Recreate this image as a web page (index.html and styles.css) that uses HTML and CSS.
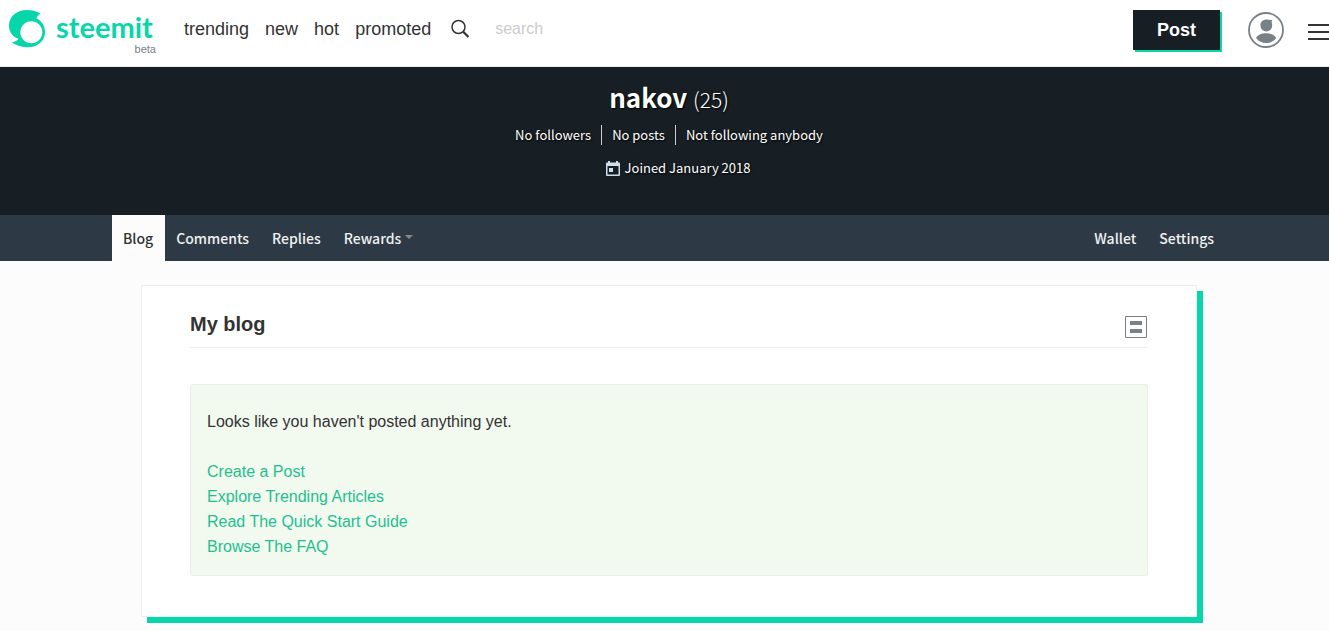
FILE: index.html
```html
<!DOCTYPE html>
<html lang="en">
<head>
<meta charset="utf-8">
<title>nakov — Steemit</title>
<link rel="stylesheet" href="styles.css">
</head>
<body>
<div class="page">
  <header class="header">
    <a class="logo" href="#">
      <svg class="logo-mark" viewBox="0 0 36 38" width="36" height="38" aria-hidden="true">
        <path fill="#06d6a9" fill-rule="evenodd" d="M0 15.500C0 6 8 0 18 0c5 0 9 1 13.500 3.500C29.500 5 28.500 6 27.300 8.300C32.500 10.500 36 16 36 22c0 9-7.500 15.300-17 15.300C13 37.300 7.500 35.500 2.800 32.500C6 31.800 8.500 30.800 9.500 28.800C4 27.500 0 22 0 15.500zM22.300 11.300a11 11 0 1 0 0 22a11 11 0 1 0 0-22z"/>
      </svg>
      <span class="logo-text">
        <span class="logo-name">steemit</span>
        <span class="logo-beta">beta</span>
      </span>
    </a>
    <nav class="feeds" aria-label="Feeds">
      <a href="#">trending</a>
      <a href="#">new</a>
      <a href="#">hot</a>
      <a href="#">promoted</a>
    </nav>
    <form class="search">
      <button class="icon-button" type="button" aria-label="Search">
        <svg viewBox="0 0 20 20" width="20" height="20" fill="none" stroke="#333" aria-hidden="true">
          <circle cx="7.500" cy="8" r="6.500" stroke-width="1.500"/>
          <path d="M12.200 12.700l5.300 5.300" stroke-width="2.200"/>
        </svg>
      </button>
      <input class="search-input" type="text" placeholder="search" aria-label="Search text">
    </form>
    <div class="actions">
      <button class="post" type="button">Post</button>
      <button class="icon-button avatar" type="button" aria-label="Account">
        <svg viewBox="0 0 36 36" width="36" height="36" aria-hidden="true">
          <circle cx="18" cy="18" r="17" fill="none" stroke="#788187" stroke-width="1.800"/>
          <path fill="#788187" d="M24.300 7.900c-.7.900-.8 2-.4 3.400.2.800.3 1.500.3 2.200a5.900 5.900 0 0 1-11.800 0C12.400 9.800 15 7.600 18.600 7.600c2 0 3.700.6 5.700.3z"/>
          <path fill="#788187" d="M8 26c2-3.400 6-4.800 10.200-4.800S26.200 22.600 28.300 26c-2.600 3.300-6 5-10.100 5S10.600 29.300 8 26z"/>
        </svg>
      </button>
      <button class="icon-button menu" type="button" aria-label="Menu">
        <svg viewBox="0 0 24 18" width="24" height="18" aria-hidden="true">
          <path fill="#333" d="M0 1h24v2H0zM0 8h24v2H0zM0 15h24v2H0z"/>
        </svg>
      </button>
    </div>
  </header>

  <section class="profile">
    <h1 class="profile-name">nakov <span class="reputation">(25)</span></h1>
    <ul class="stats">
      <li>No followers</li>
      <li>No posts</li>
      <li>Not following anybody</li>
    </ul>
    <p class="joined">
      <svg viewBox="0 0 14 15" width="14" height="15" aria-hidden="true">
        <path fill="#cfdeed" fill-rule="evenodd" d="M1 1.500h1V0h2v1.500h6V0h2v1.500h1a1 1 0 0 1 1 1V14a1 1 0 0 1-1 1H1a1 1 0 0 1-1-1V2.500a1 1 0 0 1 1-1zM1.500 5v8.500h11V5zM3 7h4v4H3z"/>
      </svg>
      <span>Joined January 2018</span>
    </p>
  </section>

  <nav class="tabs" aria-label="Profile">
    <div class="tabs-inner">
      <a class="tab tab-active" href="#">Blog</a>
      <a class="tab" href="#">Comments</a>
      <a class="tab" href="#">Replies</a>
      <a class="tab tab-rewards" href="#">Rewards<span class="caret"></span></a>
      <a class="tab tab-right" href="#">Wallet</a>
      <a class="tab" href="#">Settings</a>
    </div>
  </nav>

  <main class="card">
    <div class="card-head">
      <h2 class="card-title">My blog</h2>
      <button class="icon-button" type="button" aria-label="Change layout">
        <svg viewBox="0 0 22 22" width="22" height="22" aria-hidden="true">
          <path fill="none" stroke="#788187" d="M.5.5h21v21H.5z"/>
          <path fill="#788187" d="M5 5h12v4H5zM5 13h12v4H5z"/>
        </svg>
      </button>
    </div>
    <div class="callout">
      <p class="callout-text">Looks like you haven't posted anything yet.</p>
      <ul class="links">
        <li><a href="#">Create a Post</a></li>
        <li><a href="#">Explore Trending Articles</a></li>
        <li><a href="#">Read The Quick Start Guide</a></li>
        <li><a href="#">Browse The FAQ</a></li>
      </ul>
    </div>
  </main>
</div>
</body>
</html>
```
FILE: styles.css
```css
* {
  box-sizing: border-box;
}

html {
  overflow-x: hidden;
}

body {
  margin: 0;
  overflow-x: hidden;
  background: #fcfcfc;
  color: #333;
  font: 16px/25px "Liberation Sans", Arial, sans-serif;
}

h1, h2, p, ul {
  margin: 0;
  padding: 0;
}

ul {
  list-style: none;
}

a {
  color: inherit;
  text-decoration: none;
}

svg {
  display: block;
}

/* The layout runs slightly past the right edge of the window. */
.page {
  margin-right: -9px;
}

.icon-button {
  padding: 0;
  border: 0;
  background: none;
  cursor: pointer;
}

/* Header */
.header {
  display: flex;
  align-items: flex-start;
  height: 67px;
  padding: 10px 6px 0 9px;
  border-bottom: 1px solid #eee;
  background: #fff;
}

.logo {
  display: flex;
  gap: 11px;
}

.logo-text {
  display: flex;
  flex-direction: column;
  width: 100px;
}

.logo-name {
  color: #06d6a9;
  font: 700 29px/34px Lato, sans-serif;
}

.logo-beta {
  align-self: flex-end;
  color: #788187;
  font-size: 11px;
  line-height: 10px;
}

.feeds {
  display: flex;
  gap: 16px;
  padding-top: 7px;
  margin-left: 28px;
  font-size: 18px;
}

.search {
  display: flex;
  gap: 24px;
  padding-top: 9px;
  margin-left: 20px;
}

.search-input {
  width: 140px;
  height: 20px;
  padding: 0;
  border: 0;
  background: none;
  font: 16px/20px "Liberation Sans", Arial, sans-serif;
}

.search-input::placeholder {
  color: #ccc;
}

.actions {
  display: flex;
  align-items: center;
  margin-left: auto;
}

.post {
  width: 87px;
  height: 40px;
  padding: 0;
  border: 0;
  background: #171f24;
  box-shadow: 2px 2px 0 #06d6a9;
  color: #fff;
  font: 700 18px/40px "Liberation Sans", Arial, sans-serif;
}

.avatar {
  margin-left: 28px;
}

.menu {
  padding-top: 4px;
  margin-left: 24px;
}

/* Profile banner */
.profile {
  display: flex;
  flex-direction: column;
  align-items: center;
  height: 148px;
  padding-top: 12px;
  background: #171f24;
  color: #fff;
  font: 400 13px/20px "Noto Sans CJK SC", sans-serif;
  text-shadow: 1px 1px 2px #000;
}

.profile-name {
  font-size: 26px;
  font-weight: 700;
  line-height: 36px;
}

.reputation {
  font-size: 21px;
  font-weight: 300;
}

.stats {
  display: flex;
  margin-top: 8px;
}

.stats li {
  padding: 0 10px;
}

.stats li + li {
  border-left: 1px solid #ccc;
}

.joined {
  display: flex;
  align-items: center;
  gap: 5px;
  margin: 13px 0 0 18px;
}

/* Tabs */
.tabs {
  background: #2d3a45;
}

.tabs-inner {
  display: flex;
  max-width: 1114px;
  margin: 0 auto;
}

.tab {
  padding: 0 12px 0 11px;
  color: #f0f0f0;
  font: 500 14px/46px "Noto Sans CJK SC", sans-serif;
}

.tab-active {
  background: #fcfcfc;
  color: #333;
}

.tab-right {
  margin-left: auto;
}

.tab-rewards {
  display: flex;
  gap: 4px;
}

.caret {
  height: 4px;
  margin-top: 20px;
  border: 4px solid transparent;
  border-top-color: #888;
  border-bottom: 0;
}

/* Blog card */
.card {
  max-width: 1056px;
  padding: 24px 48px 40px;
  margin: 24px auto 13px;
  border: 1px solid #eee;
  background: #fff;
  box-shadow: 6px 6px 0 #06d6a9;
}

.card-head {
  display: flex;
  align-items: flex-end;
  justify-content: space-between;
  height: 38px;
  padding: 0 1px 9px 0;
  border-bottom: 1px solid #eee;
}

.card-title {
  font-size: 20px;
  line-height: 28px;
}

.callout {
  padding: 24px 16px 16px;
  margin-top: 36px;
  border: 1px solid #eaedea;
  border-radius: 3px;
  background: #f2f9ef;
}

.links {
  margin-top: 25px;
  color: #1fbf8f;
}
```
